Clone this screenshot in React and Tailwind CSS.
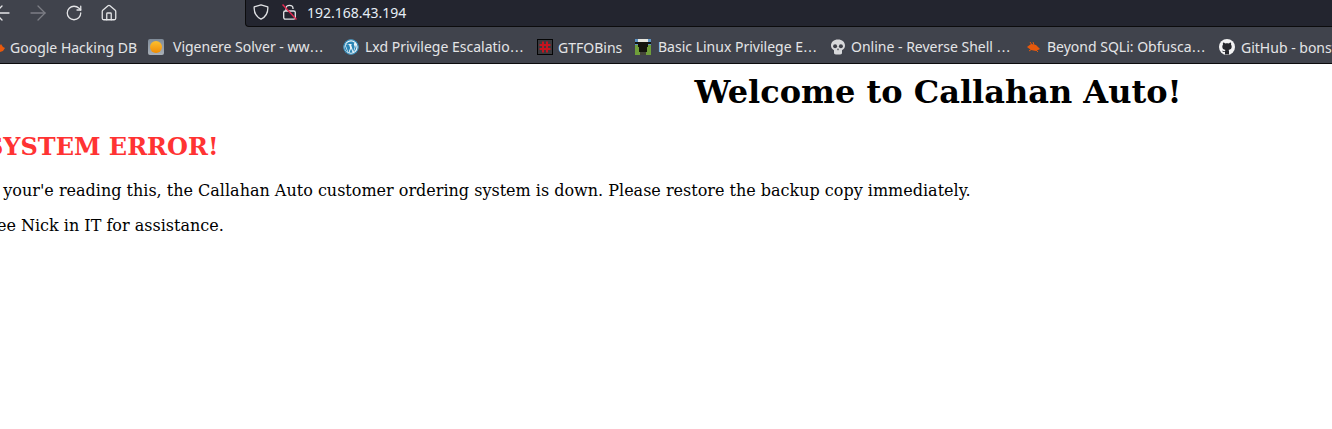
import { ArrowLeft, ArrowRight, RotateCw, House } from 'lucide-react';

// Favicons for the bookmarks bar
const FlameIcon = () => (
  <svg width="8" height="12" viewBox="0 0 8 12" className="shrink-0">
    <path d="M0 7 L3 3 L5 6 L7 7 L5 10 L2 11 Z" fill="#e8590c" />
  </svg>
);

const OrangeBall = () => (
  <div className="w-4 h-4 shrink-0 rounded-[2px] bg-gradient-to-b from-[#7f8b98] to-[#a9b0b8] flex items-center justify-center">
    <div className="w-3 h-3 rounded-full bg-gradient-to-b from-[#fcc02e] to-[#f08c00]" />
  </div>
);

const WordpressIcon = () => (
  <svg width="16" height="16" viewBox="0 0 16 16" className="shrink-0">
    <circle cx="8" cy="8" r="7.5" fill="#eef5f9" />
    <path d="M2.4 5.6 L5.4 13.8 L7.2 9 L6 5.6 H5 V5 H9 V5.6 H8 L10.2 12.4 L11.6 8.4 C11.9 7 11 6.4 10.9 5.4 C10.9 4.6 11.4 4.1 12 4.1 C10.9 3 9.6 2.4 8 2.4 C6 2.4 4.2 3.4 3.2 5 L4.4 5 V5.6 Z" fill="#2a85b5" />
    <path d="M12.9 5.4 C13.9 7.4 13.6 10.4 11.2 12.7 L10.6 13.4 L12.4 8.2 C12.8 7.2 13 6.2 12.9 5.4 Z M2 6.4 L4.6 13.2 C2.2 11.6 1.2 8.8 2 6.4 Z M8.1 9.4 L9.6 13.4 C8.6 13.7 7.4 13.7 6.4 13.4 Z" fill="#2a85b5" />
    <circle cx="8" cy="8" r="7.2" fill="none" stroke="#2a85b5" strokeWidth="1.1" />
  </svg>
);

const GtfoIcon = () => (
  <svg width="16" height="16" viewBox="0 0 16 16" className="shrink-0">
    <rect x="0.5" y="0.5" width="15" height="15" fill="#3a3a3e" stroke="#050505" />
    <path d="M6 2.5 V13.5 M10 2.5 V13.5 M2.5 6 H13.5 M2.5 10 H13.5" stroke="#c4141f" strokeWidth="2" />
  </svg>
);

const CowIcon = () => (
  <svg width="16" height="16" viewBox="0 0 16 16" className="shrink-0">
    <rect width="16" height="6" fill="#5c93c4" />
    <rect y="6" width="16" height="10" fill="#6f9e3a" />
    <rect x="3" y="0" width="10" height="3" fill="#e6e6de" />
    <rect x="0" y="3" width="16" height="2" fill="#14140e" />
    <rect x="3" y="3" width="10" height="5" fill="#14140e" />
    <rect x="4" y="8" width="8" height="5" fill="#14140e" />
    <rect x="5" y="13" width="6" height="3" fill="#44443a" />
  </svg>
);

const SkullIcon = () => (
  <svg width="16" height="16" viewBox="0 0 16 16" className="shrink-0">
    <path d="M8 0.5 C3.8 0.5 1 3 1 6.6 C1 8.8 2 10.4 4 11.2 V14 C4 15 5 15.5 8 15.5 C11 15.5 12 15 12 14 V11.2 C14 10.4 15 8.8 15 6.6 C15 3 12.2 0.5 8 0.5 Z" fill="#d7d8da" />
    <circle cx="5.1" cy="7.2" r="2" fill="#3d3f47" />
    <circle cx="10.9" cy="7.2" r="2" fill="#3d3f47" />
    <rect x="7.4" y="9.6" width="1.2" height="1.6" fill="#3d3f47" />
  </svg>
);

const BugIcon = () => (
  <svg width="16" height="16" viewBox="0 0 16 16" className="shrink-0">
    <path d="M1 8 L5 5 L10 6 L14 10 L10 12 L5 11 Z" fill="#e8590c" />
    <path d="M4 3 L6 6 M7 3 L8 6 M3 12 L6 10 M12 13 L10 11" stroke="#e8590c" strokeWidth="1" />
  </svg>
);

const GithubIcon = () => (
  <svg width="16" height="16" viewBox="0 0 16 16" className="shrink-0">
    <circle cx="8" cy="8" r="8" fill="#f2f2f3" />
    <path d="M6 15.5 V13 C4 13.4 3.6 12.4 3 11.4 C4 11.6 4.4 12.4 6 12.2 C6 11.6 6.2 11.2 6.5 11 C4.4 10.7 3.3 9.7 3.3 7.6 C3.3 6.8 3.6 6.1 4 5.6 C3.8 5 3.8 4.2 4.1 3.6 C4.9 3.6 5.6 4 6.2 4.5 C7.3 4.2 8.7 4.2 9.8 4.5 C10.4 4 11.1 3.6 11.9 3.6 C12.2 4.2 12.2 5 12 5.6 C12.4 6.1 12.7 6.8 12.7 7.6 C12.7 9.7 11.6 10.7 9.5 11 C9.9 11.3 10 11.8 10 12.4 V15.5 Z" fill="#26272d" />
  </svg>
);

const bookmarks = [
  { icon: <FlameIcon />, label: 'Google Hacking DB', gap: 'gap-[4px]', width: 'w-[150px]' },
  { icon: <OrangeBall />, label: 'Vigenere Solver - ww…', gap: 'gap-[9px]', width: 'w-[195px]' },
  { icon: <WordpressIcon />, label: 'Lxd Privilege Escalatio…', gap: 'gap-[6px]', width: 'w-[194px]' },
  { icon: <GtfoIcon />, label: 'GTFOBins', gap: 'gap-[5px]', width: 'w-[98px]' },
  { icon: <CowIcon />, label: 'Basic Linux Privilege E…', gap: 'gap-[7px]', width: 'w-[195px]' },
  { icon: <SkullIcon />, label: 'Online - Reverse Shell …', gap: 'gap-[5px]', width: 'w-[196px]' },
  { icon: <BugIcon />, label: 'Beyond SQLi: Obfusca…', gap: 'gap-[5px]', width: 'w-[193px]' },
  { icon: <GithubIcon />, label: 'GitHub - bonswor', gap: 'gap-[6px]', width: 'w-[130px]' },
];

// The ellipsis in the reference is wider than Noto Sans draws it
const BookmarkLabel = ({ label }) => {
  if (!label.endsWith('…')) return <span>{label}</span>;
  return (
    <span>
      {label.slice(0, -1)}
      <span className="font-['DejaVu_Sans',sans-serif]">…</span>
    </span>
  );
};

export default function App() {
  return (
    <div className="w-[1332px] h-[429px] overflow-hidden bg-white">
      {/* Browser chrome */}
      <div className="h-16 bg-[#40434c] border-b border-[#0c0c0d] font-['Noto_Sans',sans-serif] text-[14px] text-[#e4e5e7]">
        <div className="h-7 flex">
          <div className="w-[245px] shrink-0 flex items-center pb-[3px] text-[#e4e5e7]">
            <ArrowLeft size={24} strokeWidth={1.3} className="shrink-0 -ml-[10px]" />
            <ArrowRight size={24} strokeWidth={1.3} className="shrink-0 ml-[12px] text-[#7c7e85]" />
            <RotateCw size={18} strokeWidth={1.7} className="shrink-0 ml-[15px]" />
            <House size={18} strokeWidth={1.7} className="shrink-0 ml-[17px]" />
          </div>
          <div className="flex-1 h-[27px] flex items-center bg-[#23252f] rounded-bl-[4px] border-l border-b border-[#0c0c0d] pl-[7px] pb-[2px]">
            <svg width="16" height="16" viewBox="0 0 16 16" fill="none" className="shrink-0">
              <path d="M8 0.8 L14.8 2.8 C15.2 8.5 13 12.8 8 15.2 C3 12.8 0.8 8.5 1.2 2.8 Z" stroke="#dfe0e3" strokeWidth="1.3" strokeLinejoin="round" />
            </svg>
            <svg width="15" height="16" viewBox="0 0 15 16" fill="none" className="shrink-0 ml-[13px]">
              <path d="M4 7 V4.4 C4 0.3 11 0.3 11 4.4 V5" stroke="#e4e5e7" strokeWidth="1.3" />
              <rect x="1.7" y="7" width="11.6" height="8.2" rx="1.6" stroke="#e4e5e7" strokeWidth="1.3" />
              <path d="M0.5 0.5 L14.5 15.5" stroke="#e22850" strokeWidth="1.5" />
            </svg>
            <span className="ml-[10px] text-[#e6edf5]">192.168.43.194</span>
          </div>
        </div>
        <div className="h-[35px] flex items-center pt-[3px] whitespace-nowrap overflow-hidden -ml-[2px]">
          {bookmarks.map((b) => (
            <div key={b.label} className={`flex items-center shrink-0 ${b.gap} ${b.width}`}>
              {b.icon}
              <BookmarkLabel label={b.label} />
            </div>
          ))}
        </div>
      </div>

      {/* Page content, scrolled slightly to the right */}
      <div className="-ml-[14px] w-[1904px] font-['DejaVu_Serif',serif] text-black text-[16px]">
        <h1 className="text-[32px] font-bold text-center mt-[9px] leading-[38px]">Welcome to Callahan Auto!</h1>
        <h2 className="text-[24px] font-bold text-[#ff3333] mt-[22px] leading-[28px]">SYSTEM ERROR!</h2>
        <p className="mt-[20px] leading-[19px]">If your'e reading this, the Callahan Auto customer ordering system is down. Please restore the backup copy immediately.</p>
        <p className="mt-[16px] leading-[19px]">See Nick in IT for assistance.</p>
      </div>
    </div>
  );
}
